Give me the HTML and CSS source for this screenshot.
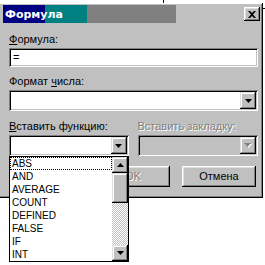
FILE: index.html
```html
<!DOCTYPE html>
<html lang="ru">
<head>
<meta charset="utf-8">
<title>Формула</title>
<link rel="stylesheet" href="styles.css">
</head>
<body>
<div class="deco-v"></div>
<div class="deco-h"></div>
<div class="dialog">
  <div class="titlebar">
    <span class="title">Формула</span>
    <span class="close">
      <svg width="8" height="7" viewBox="0 0 8 7"><path d="M0 0H2L4 2L6 0H8L5 3.5L8 7H6L4 5L2 7H0L3 3.5Z" fill="#000"/></svg>
    </span>
  </div>
  <div class="body">
    <div class="lbl first"><u>Ф</u>ормула:</div>
    <div class="field">=</div>
    <div class="lbl"><span>Формат <u>ч</u>исла:</span></div>
    <div class="combo"><span class="cbtn"><svg width="7" height="4" viewBox="0 0 7 4"><path d="M0 0H7L3.5 4Z" fill="#000"/></svg></span></div>
    <div class="row2">
      <div class="col">
        <div class="lbl"><u>В</u>ставить функцию:</div>
        <div class="combo fn">
          <span class="cbtn"><svg width="7" height="4" viewBox="0 0 7 4"><path d="M0 0H7L3.5 4Z" fill="#000"/></svg></span>
          <div class="droplist">
            <div class="items">
              <div class="item focus">ABS</div>
              <div class="item">AND</div>
              <div class="item">AVERAGE</div>
              <div class="item">COUNT</div>
              <div class="item">DEFINED</div>
              <div class="item">FALSE</div>
              <div class="item">IF</div>
              <div class="item">INT</div>
            </div>
            <div class="scroll">
              <div class="sbtn"><svg width="7" height="4" viewBox="0 0 7 4"><path d="M0 4H7L3.5 0Z" fill="#000"/></svg></div>
              <div class="thumb"></div>
              <div class="track"></div>
              <div class="sbtn"><svg width="7" height="4" viewBox="0 0 7 4"><path d="M0 0H7L3.5 4Z" fill="#000"/></svg></div>
            </div>
          </div>
        </div>
      </div>
      <div class="col">
        <div class="lbl disabled">Вставить закладку:</div>
        <div class="combo dis"><span class="cbtn"><svg width="8" height="5" viewBox="0 0 8 5"><path d="M1 1H8L4.5 5Z" fill="#fff"/><path d="M0 0H7L3.5 4Z" fill="#808080"/></svg></span></div>
      </div>
    </div>
    <div class="buttons">
      <div class="btn disabled">OK</div>
      <div class="btn">Отмена</div>
    </div>
  </div>
</div>
</body>
</html>
```
FILE: styles.css
```css
html, body {
  margin: 0;
  padding: 0;
  background: #fff;
}
body {
  font-family: "Liberation Sans", Arial, sans-serif;
  font-size: 11px;
  line-height: 13px;
  color: #000;
  position: relative;
  width: 265px;
  height: 265px;
  overflow: hidden;
}
.deco-v {
  position: absolute;
  left: 163px;
  top: 0;
  width: 1px;
  height: 3px;
  background: #000;
}
.deco-h {
  position: absolute;
  left: 262px;
  top: 8px;
  width: 3px;
  height: 1px;
  background: #000;
}
.dialog {
  margin-top: 3px;
  width: 263px;
  height: 195px;
  box-sizing: border-box;
  background: #c0c0c0;
  padding: 2px 3px 3px 3px;
  box-shadow: inset -1px -1px #000, inset 0 1px #fff, inset -2px -2px #808080;
}
.titlebar {
  height: 18px;
  display: flex;
  align-items: center;
  justify-content: space-between;
  padding-left: 2px;
  padding-right: 0;
  background: linear-gradient(to right, #000080 0, #000080 42px, #008080 42px, #008080 84px, #808080 84px, #808080 173px, #c0c0c0 173px);
}
.title {
  color: #fff;
  font-family: "DejaVu Sans", "Liberation Sans", sans-serif;
  font-weight: bold;
  font-size: 11px;
}
.close {
  width: 16px;
  height: 14px;
  box-sizing: border-box;
  background: #c0c0c0;
  display: flex;
  align-items: center;
  justify-content: center;
  box-shadow: inset -1px -1px #000, inset 1px 1px #fff, inset -2px -2px #808080, inset 2px 2px #dfdfdf;
}
.body {
  padding: 0 2px 0 6px;
  display: flex;
  flex-direction: column;
}
.lbl {
  height: 13px;
  margin-top: 8px;
  white-space: nowrap;
}
.lbl.first {
  margin-top: 10px;
}
.lbl.disabled {
  color: #808080;
  text-shadow: 1px 1px #fff;
}
.field {
  margin-top: 2px;
  height: 19px;
  box-sizing: border-box;
  background: #fff;
  padding: 3px 4px;
  line-height: 13px;
  box-shadow: inset 1px 1px #808080, inset -1px -1px #fff, inset 2px 2px #000, inset -2px -2px #c0c0c0;
}
.combo {
  position: relative;
  margin-top: 2px;
  height: 21px;
  box-sizing: border-box;
  background: #fff;
  padding: 2px;
  display: flex;
  justify-content: flex-end;
  box-shadow: inset 1px 1px #808080, inset -1px -1px #fff, inset 2px 2px #000, inset -2px -2px #c0c0c0;
}
.combo.dis {
  background: #c0c0c0;
}
.cbtn {
  width: 16px;
  height: 17px;
  box-sizing: border-box;
  background: #c0c0c0;
  display: flex;
  align-items: center;
  justify-content: center;
  box-shadow: inset -1px -1px #000, inset 1px 1px #dfdfdf, inset -2px -2px #808080, inset 2px 2px #fff;
}
.row2 {
  display: flex;
  gap: 9px;
}
.row2 .col:first-child {
  width: 120px;
}
.row2 .col:last-child {
  width: 121px;
}
.row2 .lbl {
  margin-top: 9px;
}
.droplist {
  position: absolute;
  left: 0;
  top: 21px;
  width: 120px;
  height: 106px;
  box-sizing: border-box;
  border: 1px solid #000;
  background: #fff;
  display: flex;
  z-index: 5;
}
.items {
  width: 102px;
  display: flex;
  flex-direction: column;
}
.item {
  height: 13px;
  line-height: 13px;
  padding-left: 2px;
  font-size: 10px;
  white-space: nowrap;
}
.item.focus {
  outline: 1px dotted #000;
  outline-offset: -1px;
}
.scroll {
  width: 16px;
  display: flex;
  flex-direction: column;
}
.sbtn, .thumb {
  box-sizing: border-box;
  background: #c0c0c0;
  display: flex;
  align-items: center;
  justify-content: center;
  box-shadow: inset -1px -1px #000, inset 1px 1px #dfdfdf, inset -2px -2px #808080, inset 2px 2px #fff;
}
.sbtn {
  height: 16px;
}
.thumb {
  height: 30px;
}
.track {
  flex: 1;
  background-color: #c0c0c0;
  background-image: conic-gradient(#fff 25%, #c0c0c0 0 50%, #fff 0 75%, #c0c0c0 0);
  background-size: 2px 2px;
}
.buttons {
  margin-top: 10px;
  display: flex;
  justify-content: flex-end;
  gap: 12px;
  padding-right: 2px;
}
.btn {
  width: 74px;
  height: 21px;
  box-sizing: border-box;
  background: #c0c0c0;
  display: flex;
  align-items: center;
  justify-content: center;
  box-shadow: inset -1px -1px #000, inset 1px 1px #fff, inset -2px -2px #808080, inset 2px 2px #dfdfdf;
}
.btn.disabled {
  color: #808080;
  text-shadow: 1px 1px #fff;
}
```
